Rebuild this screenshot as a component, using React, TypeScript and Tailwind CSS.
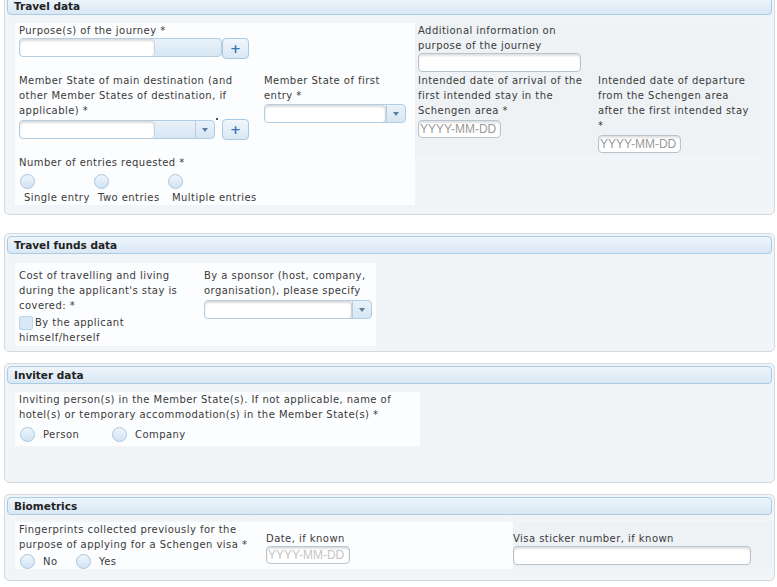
import type { ReactNode } from 'react'

function Label({ children, className = '' }: { children: ReactNode; className?: string }) {
    return <div className={`text-[10px] leading-[15px] tracking-[0.45px] text-[#3a3a3a] ${className}`}>{children}</div>
}

function TextInput({ className = '', placeholder }: { className?: string; placeholder?: string }) {
    return (
        <div
            className={`flex items-center rounded-[4px] border border-[#b7c3cd] bg-white pl-[1px] font-['Liberation_Sans',Arial,sans-serif] text-[12px] text-[#9a9a9a] shadow-[inset_0_2px_2px_rgba(0,0,0,0.12)] ${className}`}
        >
            {placeholder}
        </div>
    )
}

function Combo({ width, inner, arrow }: { width: string; inner: string; arrow?: boolean }) {
    return (
        <div className={`flex h-[19px] rounded-[4px] border border-[#b3cde3] bg-gradient-to-b from-[#e9f2fa] to-[#d6e6f4] ${width}`}>
            <div className={`h-full rounded-[4px] border-r border-[#c9d4dd] bg-white shadow-[inset_0_2px_2px_rgba(0,0,0,0.14)] ${inner}`} />
            <div className="flex-1" />
            {arrow && (
                <div className="flex w-[19px] items-center justify-center border-l border-[#b3cde3]">
                    <svg width="6" height="4" viewBox="0 0 6 4">
                        <path d="M0 0h6L3 4z" fill="#5a7f9f" />
                    </svg>
                </div>
            )}
        </div>
    )
}

function PlusButton() {
    return (
        <div className="flex h-[21px] w-[27px] items-center justify-center rounded-[4px] border border-[#a9c9e2] bg-gradient-to-b from-[#f0f6fb] to-[#d8e8f5] text-[13px] font-bold leading-none text-[#3a77b5]">
            +
        </div>
    )
}

function Radio() {
    return <div className="h-[15px] w-[15px] rounded-full border border-[#a9c6e0] bg-gradient-to-b from-[#eef5fb] to-[#d2e3f2]" />
}

function Panel({ title, className = '', children }: { title: string; className?: string; children: ReactNode }) {
    return (
        <div className={`ml-[4px] w-[771px] rounded-[5px] border border-[#d3d9de] bg-[#f2f5f7] p-[2px] ${className}`}>
            <div className="h-[18px] rounded-[4px] border border-[#a9cbe4] bg-gradient-to-b from-[#eef5fb] to-[#d9e8f5] pl-[6px] text-[10.5px] font-bold leading-[16px] text-[#222]">
                {title}
            </div>
            {children}
        </div>
    )
}

export default function App() {
    return (
        <div className="h-[587px] w-[777px] overflow-hidden bg-white font-['DejaVu_Sans',Verdana,sans-serif]">
            <Panel title="Travel data" className="mt-[-6px]">
                <div className="grid grid-cols-[249px_151px_180px_165px] pl-[8px] pt-[8px] pb-[7px]">
                    <div className="col-span-2 h-[50px] bg-[#fcfdfe] pl-[4px]">
                        <Label>Purpose(s) of the journey *</Label>
                        <div className="flex items-start">
                            <Combo width="w-[203px]" inner="w-[135px]" />
                            <PlusButton />
                        </div>
                    </div>
                    <div className="col-span-2 bg-[#eef2f5] pl-[3px]">
                        <Label>
                            Additional information on
                            <br />
                            purpose of the journey
                        </Label>
                        <TextInput className="h-[19px] w-[163px]" />
                    </div>

                    <div className="bg-[#fcfdfe] pl-[4px]">
                        <Label>
                            Member State of main destination (and
                            <br />
                            other Member States of destination, if
                            <br />
                            applicable) *
                        </Label>
                        <div className="flex items-start pt-[1px]">
                            <div className="mt-[1px]">
                                <Combo width="w-[196px]" inner="w-[135px]" arrow />
                            </div>
                            <div className="mx-[1px] mt-[-1px] h-[2px] w-[2px] bg-[#555]" />
                            <div className="ml-[3px]">
                                <PlusButton />
                            </div>
                        </div>
                    </div>
                    <div className="bg-[#fcfdfe]">
                        <Label>
                            Member State of first
                            <br />
                            entry *
                        </Label>
                        <div className="pt-[1px]">
                            <Combo width="w-[142px]" inner="w-[123px]" arrow />
                        </div>
                    </div>
                    <div className="bg-[#eef2f5] pl-[3px]">
                        <Label>
                            Intended date of arrival of the
                            <br />
                            first intended stay in the
                            <br />
                            Schengen area *
                        </Label>
                        <TextInput className="mt-[2px] h-[18px] w-[83px]" placeholder="YYYY-MM-DD" />
                    </div>
                    <div className="bg-[#eef2f5] pb-[2px] pl-[3px]">
                        <Label>
                            Intended date of departure
                            <br />
                            from the Schengen area
                            <br />
                            after the first intended stay
                            <br />*
                        </Label>
                        <TextInput className="mt-[2px] h-[18px] w-[83px]" placeholder="YYYY-MM-DD" />
                    </div>

                    <div className="col-span-2 bg-[#fcfdfe] pl-[4px]">
                        <Label>Number of entries requested *</Label>
                        <div className="mt-[4px] flex">
                            {['Single entry', 'Two entries', 'Multiple entries'].map((t) => (
                                <div key={t} className="w-[74px]">
                                    <div className="ml-[1px]">
                                        <Radio />
                                    </div>
                                    <Label className="mt-[1px] ml-[5px] whitespace-nowrap">{t}</Label>
                                </div>
                            ))}
                        </div>
                    </div>
                    <div className="col-span-2" />
                </div>
            </Panel>

            <Panel title="Travel funds data" className="mt-[18px]">
                <div className="flex pl-[8px] pt-[9px] pb-[3px]">
                    <div className="flex bg-[#fcfdfe] pt-[5px] pb-[1px]">
                        <div className="w-[189px] pl-[4px]">
                            <Label>
                                Cost of travelling and living
                                <br />
                                during the applicant's stay is
                                <br />
                                covered: *
                            </Label>
                            <div className="mt-[2px] flex items-center">
                                <div className="h-[14px] w-[14px] rounded-[2px] border border-[#bcd4e9] bg-[#d9e8f5]" />
                                <Label className="ml-[2px]">By the applicant</Label>
                            </div>
                            <Label>himself/herself</Label>
                        </div>
                        <div className="w-[172px]">
                            <Label>
                                By a sponsor (host, company,
                                <br />
                                organisation), please specify
                            </Label>
                            <div className="mt-[2px]">
                                <Combo width="w-[168px]" inner="w-[149px]" arrow />
                            </div>
                        </div>
                    </div>
                </div>
            </Panel>

            <Panel title="Inviter data" className="mt-[11px]">
                <div className="pl-[8px] pt-[8px] pb-[34px]">
                    <div className="w-[405px] bg-[#fcfdfe] pl-[4px] pb-[4px]">
                        <Label>
                            Inviting person(s) in the Member State(s). If not applicable, name of
                            <br />
                            hotel(s) or temporary accommodation(s) in the Member State(s) *
                        </Label>
                        <div className="mt-[5px] flex pl-[1px]">
                            {['Person', 'Company'].map((t) => (
                                <div key={t} className="flex w-[92px] items-center">
                                    <Radio />
                                    <Label className="ml-[8px]">{t}</Label>
                                </div>
                            ))}
                        </div>
                    </div>
                </div>
            </Panel>

            <Panel title="Biometrics" className="mt-[11px]">
                <div className="flex pl-[8px] pt-[7px] pb-[9px]">
                    <div className="flex bg-[#fcfdfe]">
                        <div className="w-[251px] pl-[4px]">
                            <Label>
                                Fingerprints collected previously for the
                                <br />
                                purpose of applying for a Schengen visa *
                            </Label>
                            <div className="mt-[2px] flex pl-[1px]">
                                {['No', 'Yes'].map((t) => (
                                    <div key={t} className="flex w-[56px] items-center">
                                        <Radio />
                                        <Label className="ml-[8px]">{t}</Label>
                                    </div>
                                ))}
                            </div>
                        </div>
                        <div className="w-[247px] pt-[9px]">
                            <Label>Date, if known</Label>
                            <TextInput className="h-[18px] w-[84px] text-[#c4c4c4]" placeholder="YYYY-MM-DD" />
                        </div>
                    </div>
                    <div className="flex-1 bg-[#eef2f5] pt-[9px] pr-[12px]">
                        <Label>Visa sticker number, if known</Label>
                        <TextInput className="h-[19px] w-[238px]" />
                    </div>
                </div>
            </Panel>
        </div>
    )
}
